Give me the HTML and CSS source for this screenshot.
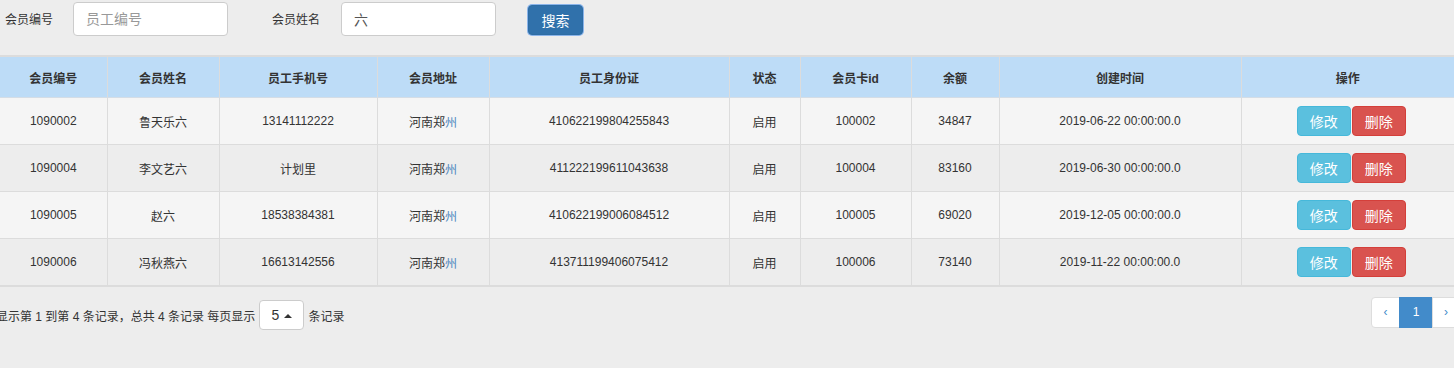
FILE: index.html
```html
<!DOCTYPE html>
<html lang="zh-CN">

<head>
  <meta charset="UTF-8">
  <meta name="viewport" content="width=device-width, initial-scale=1.0">
  <title>会员管理</title>
  <link rel="stylesheet" href="styles.css">
</head>

<body>
  <div class="search">
    <label class="search-label">会员编号</label>
    <input class="search-input" type="text" placeholder="员工编号">
    <label class="search-label second">会员姓名</label>
    <input class="search-input" type="text" value="六">
    <button class="btn btn-primary">搜索</button>
  </div>

  <table class="member-table">
    <colgroup>
      <col style="width: 107px">
      <col style="width: 112px">
      <col style="width: 158px">
      <col style="width: 112px">
      <col style="width: 240px">
      <col style="width: 71px">
      <col style="width: 111px">
      <col style="width: 88px">
      <col style="width: 242px">
      <col>
    </colgroup>
    <thead>
      <tr>
        <th>会员编号</th>
        <th>会员姓名</th>
        <th>员工手机号</th>
        <th>会员地址</th>
        <th>员工身份证</th>
        <th>状态</th>
        <th>会员卡id</th>
        <th>余额</th>
        <th>创建时间</th>
        <th>操作</th>
      </tr>
    </thead>
    <tbody>
      <tr>
        <td>1090002</td>
        <td>鲁天乐六</td>
        <td>13141112222</td>
        <td>河南郑<span class="city">州</span></td>
        <td>410622199804255843</td>
        <td>启用</td>
        <td>100002</td>
        <td>34847</td>
        <td>2019-06-22 00:00:00.0</td>
        <td><button class="btn btn-info">修改</button><button class="btn btn-danger">删除</button></td>
      </tr>
      <tr>
        <td>1090004</td>
        <td>李文艺六</td>
        <td>计划里</td>
        <td>河南郑<span class="city">州</span></td>
        <td>411222199611043638</td>
        <td>启用</td>
        <td>100004</td>
        <td>83160</td>
        <td>2019-06-30 00:00:00.0</td>
        <td><button class="btn btn-info">修改</button><button class="btn btn-danger">删除</button></td>
      </tr>
      <tr>
        <td>1090005</td>
        <td>赵六</td>
        <td>18538384381</td>
        <td>河南郑<span class="city">州</span></td>
        <td>410622199006084512</td>
        <td>启用</td>
        <td>100005</td>
        <td>69020</td>
        <td>2019-12-05 00:00:00.0</td>
        <td><button class="btn btn-info">修改</button><button class="btn btn-danger">删除</button></td>
      </tr>
      <tr>
        <td>1090006</td>
        <td>冯秋燕六</td>
        <td>16613142556</td>
        <td>河南郑<span class="city">州</span></td>
        <td>413711199406075412</td>
        <td>启用</td>
        <td>100006</td>
        <td>73140</td>
        <td>2019-11-22 00:00:00.0</td>
        <td><button class="btn btn-info">修改</button><button class="btn btn-danger">删除</button></td>
      </tr>
    </tbody>
  </table>

  <div class="table-footer">
    <div class="page-info">
      <span>显示第 1 到第 4 条记录，总共 4 条记录 每页显示</span>
      <button class="page-size">5 <span class="caret"></span></button>
      <span>条记录</span>
    </div>
    <ul class="pagination">
      <li><a href="#">‹</a></li>
      <li class="active"><a href="#">1</a></li>
      <li><a href="#">›</a></li>
    </ul>
  </div>
</body>

</html>
```

FILE: styles.css
```css
html,
body {
  margin: 0;
  overflow: hidden;
}

body {
  background: #ededed;
  color: #333;
  font-family: "Liberation Sans", "Noto Sans CJK SC", sans-serif;
  font-size: 12px;
}

.search {
  display: flex;
  align-items: center;
  height: 36px;
  padding-left: 5px;
}

.search-label {
  width: 48px;
  margin-right: 20px;
}

.search-label.second {
  margin-left: 44px;
  margin-right: 21px;
}

.search-input {
  box-sizing: border-box;
  width: 155px;
  height: 34px;
  margin-top: 1px;
  padding: 6px 12px;
  border: 1px solid #ccc;
  border-radius: 4px;
  background: #fff;
  color: #555;
  font-family: inherit;
  font-size: 14px;
  outline: none;
}

.search-input::placeholder {
  color: #999;
}

.btn {
  box-sizing: border-box;
  height: 30px;
  padding: 0 12px;
  border: 1px solid transparent;
  border-radius: 4px;
  color: #fff;
  font-family: inherit;
  font-size: 14px;
  cursor: pointer;
}

.search .btn-primary {
  width: 55px;
  margin-left: 32px;
  margin-top: 4px;
  background: #3071ab;
  border-color: #2e6da4;
  box-shadow: 0 0 0 1px #8ab4ea;
}

.member-table {
  width: 100%;
  margin-top: 19px;
  table-layout: fixed;
  border-collapse: collapse;
  border-top: 2px solid #dcdcdc;
  border-bottom: 2px solid #dcdcdc;
  text-align: center;
}

.member-table th,
.member-table td {
  border-left: 1px solid #dcdcdc;
  padding: 0;
  white-space: nowrap;
}

.member-table th:first-child,
.member-table td:first-child {
  border-left: none;
}

.member-table th {
  height: 40px;
  background: #bddcf7;
  border-bottom: 1px solid #d4dde6;
  font-weight: bold;
}

.member-table td {
  height: 46px;
  border-top: 1px solid #dcdcdc;
}

.member-table tbody tr:nth-child(odd) td {
  background: #f5f5f5;
}

.member-table tbody tr:first-child td {
  border-top: none;
}

.member-table td:last-child {
  padding-left: 7px;
  font-size: 0;
}

.city {
  color: #4b86bd;
}

.btn-info {
  width: 54px;
  background: #5bc0de;
  border-color: #46b8da;
}

.btn-danger {
  width: 54px;
  margin-left: 1px;
  background: #d9534f;
  border-color: #d43f3a;
}

.table-footer {
  display: flex;
  justify-content: space-between;
  align-items: flex-start;
  margin-top: 10px;
}

.page-info {
  display: flex;
  align-items: center;
  margin-left: -4px;
  margin-top: 3px;
}

.page-size {
  box-sizing: border-box;
  width: 45px;
  height: 30px;
  margin: 0 4px 0 4px;
  padding: 0;
  border: 1px solid #ccc;
  border-radius: 4px;
  background: #fff;
  color: #333;
  font-family: inherit;
  font-size: 14px;
}

.caret {
  display: inline-block;
  width: 0;
  height: 0;
  margin-left: 1px;
  vertical-align: 2px;
  border-left: 4px solid transparent;
  border-right: 4px solid transparent;
  border-bottom: 4px solid #333;
}

.pagination {
  display: flex;
  margin: 0 -6px 0 0;
  padding: 0;
  list-style: none;
}

.pagination a {
  display: block;
  box-sizing: border-box;
  height: 31px;
  line-height: 29px;
  padding: 0 11px;
  margin-left: -1px;
  border: 1px solid #ddd;
  background: #fff;
  color: #428bca;
  font-size: 12px;
  text-decoration: none;
}

.pagination li:first-child a {
  width: 29px;
  margin-left: 0;
  text-align: center;
  border-radius: 4px 0 0 4px;
}

.pagination li.active a {
  width: 34px;
  text-align: center;
  background: #428bca;
  border-color: #428bca;
  color: #fff;
}
```
